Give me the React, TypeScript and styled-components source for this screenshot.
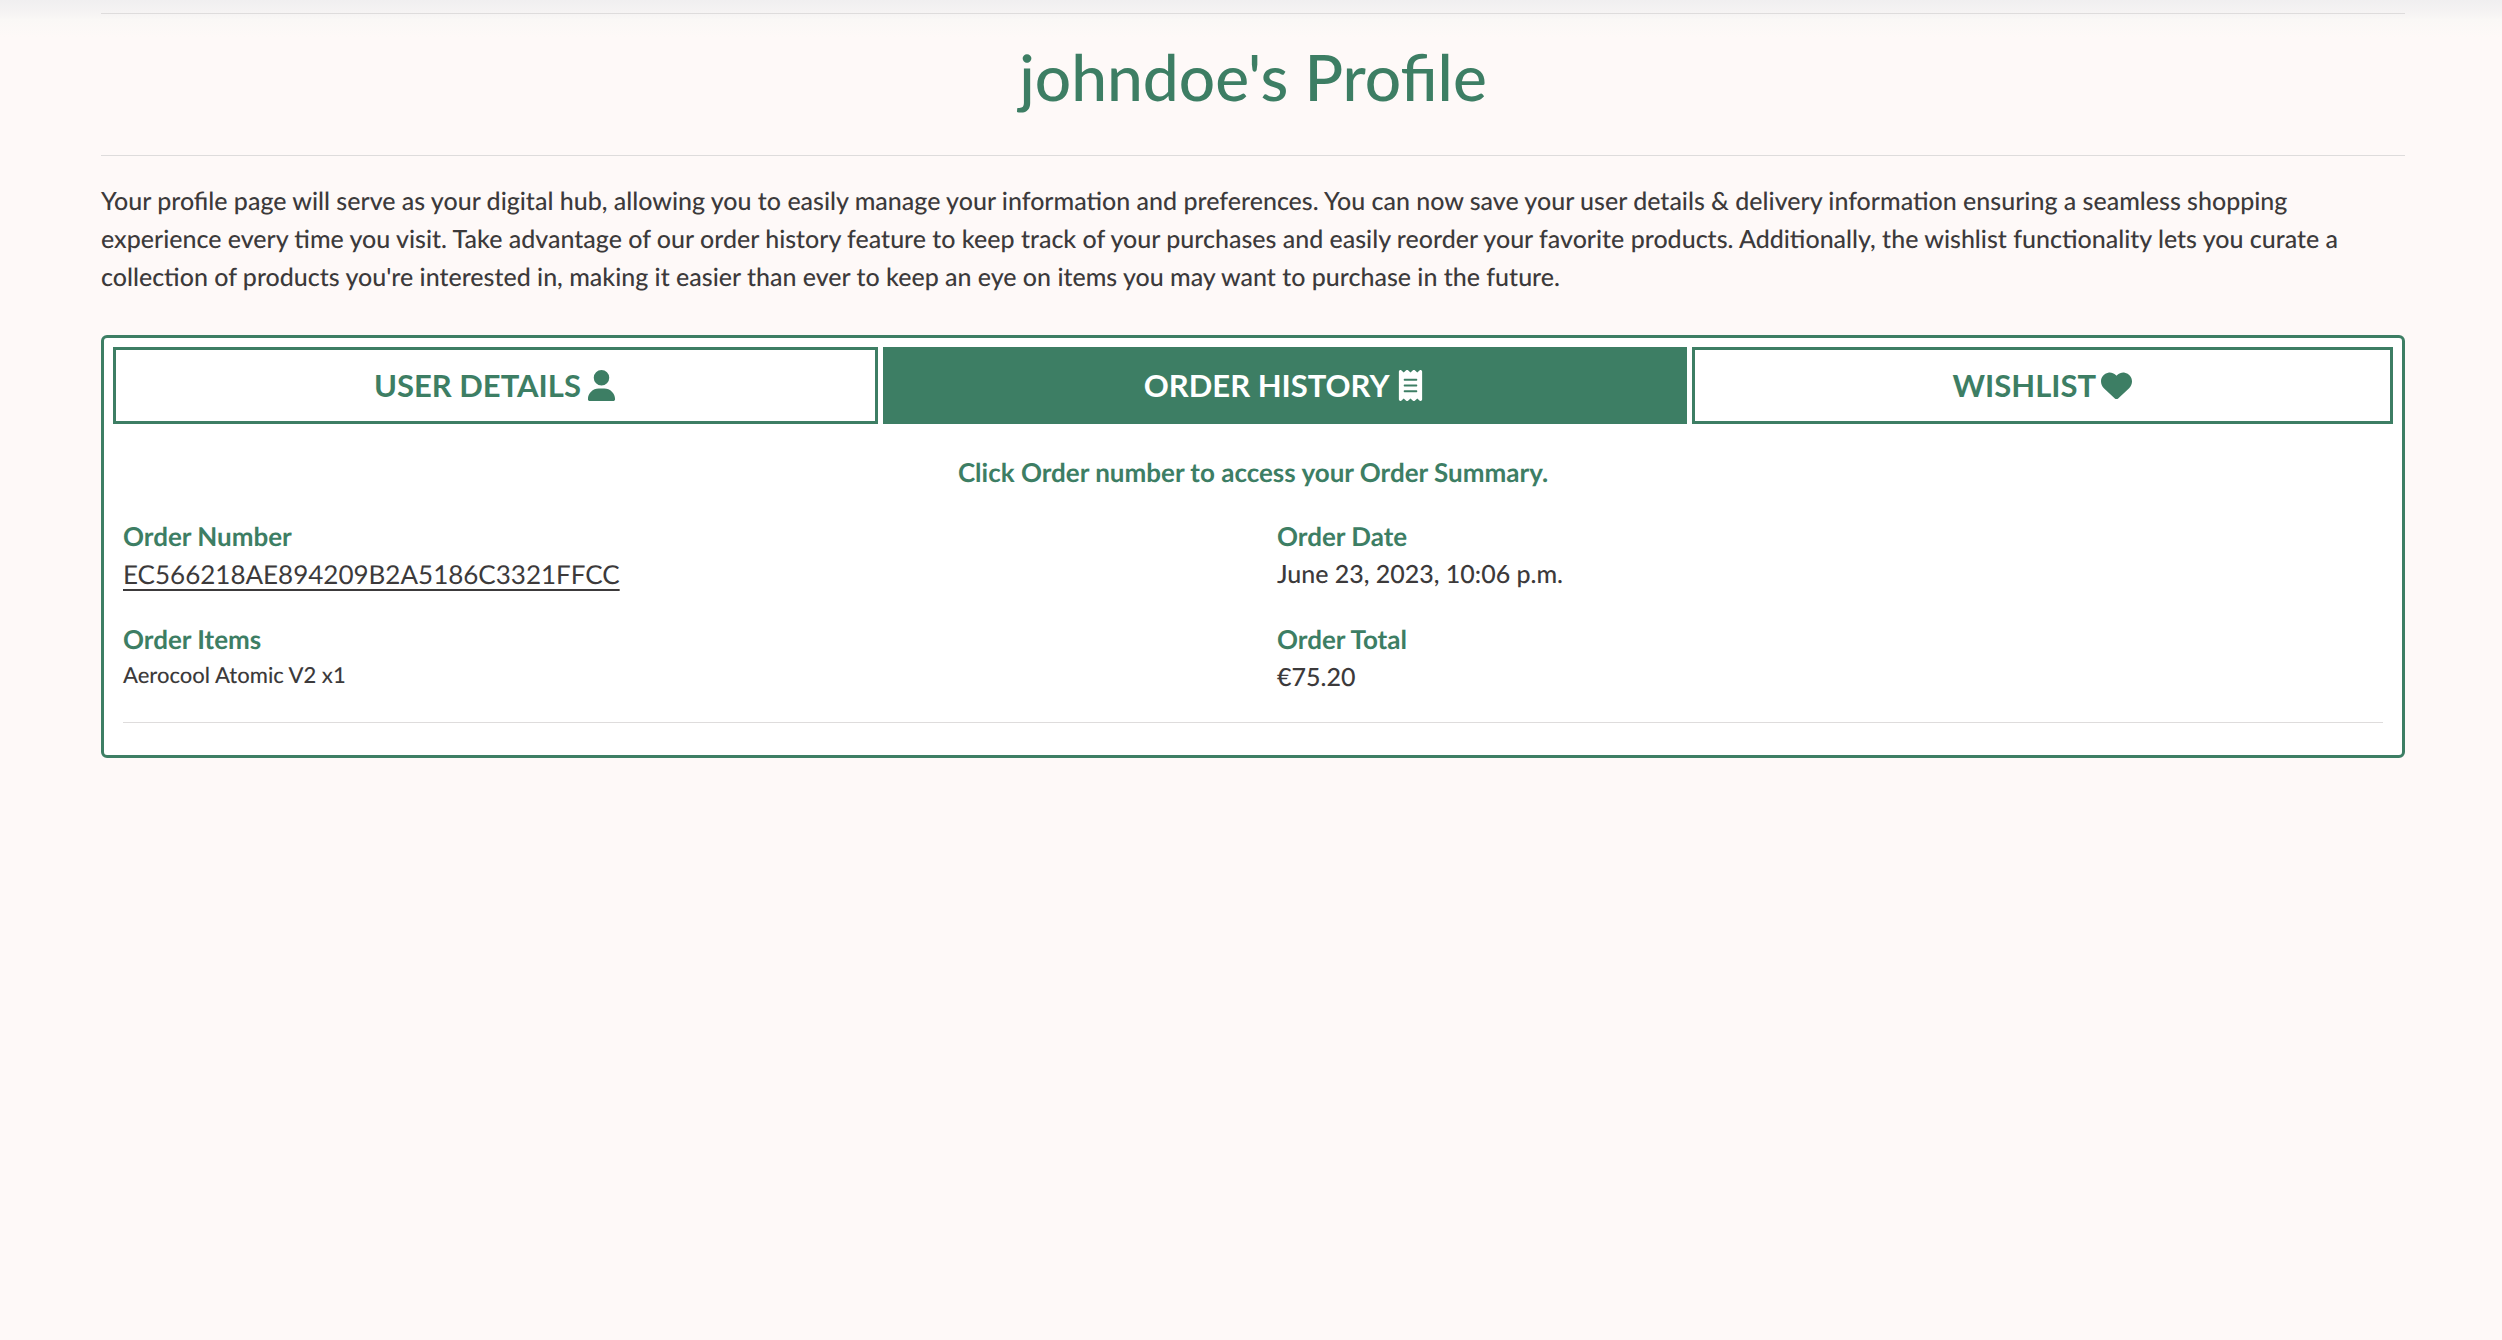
import React, { useState } from "react";
import styled, { createGlobalStyle, css } from "styled-components";
import { FaUser, FaReceipt, FaHeart } from "react-icons/fa6";

const green = "#3d7e64";
const ink = "#3c3a3b";

const GlobalStyle = createGlobalStyle`
  *, *::before, *::after { box-sizing: border-box; }
  body {
    margin: 0;
    background: #fef9f8;
    color: ${ink};
    font-family: Lato, "Open Sans", sans-serif;
    font-size: 26px;
    line-height: 38px;
    text-rendering: geometricPrecision;
  }
`;

const Page = styled.main`
  display: flex;
  flex-direction: column;
  padding: 13px 97px 40px 101px;
  background: linear-gradient(#f0eff0 0, #f5f3f3 12px, #faf8f6 20px, #fef9f8 37px);
`;

const Rule = styled.hr`
  width: 100%;
  height: 1px;
  margin: 0;
  border: 0;
  background: #dedcdc;
`;

const Title = styled.h1`
  margin: 24px 0 40px;
  color: ${green};
  font-size: 64px;
  line-height: 77px;
  font-weight: 500;
  text-align: center;
`;

const Intro = styled.p`
  margin: 26px 0 39px;
  font-size: 25px;
  font-weight: 500;
`;

const Panel = styled.section`
  padding: 9px;
  border: 3px solid ${green};
  border-radius: 6px;
  background: #fff;
`;

const Tabs = styled.div`
  display: flex;
  gap: 5px;
`;

const Tab = styled.button<{ $active: boolean }>`
  display: flex;
  flex: 1 1 auto;
  align-items: center;
  justify-content: center;
  gap: 5px;
  padding: 16px 20px;
  border: 3px solid ${green};
  border-radius: 0;
  background: #fff;
  color: ${green};
  font: 700 31px/39px Lato, "Open Sans", sans-serif;
  text-transform: uppercase;
  cursor: pointer;

  svg {
    height: 31px;
  }

  ${({ $active }) =>
    $active &&
    css`
      background: ${green};
      color: #fff;
    `}
`;

const TabBody = styled.div`
  display: flex;
  flex-direction: column;
  gap: 26px;
  padding: 29px 10px 23px;
`;

const Hint = styled.p`
  margin: 0;
  color: ${green};
  font-weight: 700;
  text-align: center;
`;

const OrderGrid = styled.dl`
  display: grid;
  grid-template-columns: 1fr 1fr;
  gap: 26px 48px;
  margin: 0;
`;

const Label = styled.dt`
  color: ${green};
  font-weight: 700;
`;

const Value = styled.dd<{ $small?: boolean }>`
  margin: 0;
  font-size: 25px;
  font-weight: 500;
  ${({ $small }) => $small && "font-size: 22px; line-height: 33px;"}
`;

const OrderLink = styled.a`
  color: inherit;
  font-size: 26px;
  font-weight: 400;
  text-decoration: underline;
  text-decoration-thickness: 2px;
  text-underline-offset: 5px;
`;

const tabs = [
  { name: "User Details", Icon: FaUser },
  { name: "Order History", Icon: FaReceipt },
  { name: "Wishlist", Icon: FaHeart },
];

export default function App() {
  const [active, setActive] = useState("Order History");

  return (
    <>
      <GlobalStyle />
      <Page>
        <Rule />
        <Title>johndoe's Profile</Title>
        <Rule />
        <Intro>
          Your profile page will serve as your digital hub, allowing you to easily manage your
          information and preferences. You can now save your user details &amp; delivery
          information ensuring a seamless shopping experience every time you visit. Take
          advantage of our order history feature to keep track of your purchases and easily
          reorder your favorite products. Additionally, the wishlist functionality lets you
          curate a collection of products you're interested in, making it easier than ever to
          keep an eye on items you may want to purchase in the future.
        </Intro>
        <Panel>
          <Tabs role="tablist">
            {tabs.map(({ name, Icon }) => (
              <Tab
                key={name}
                type="button"
                role="tab"
                aria-selected={active === name}
                $active={active === name}
                onClick={() => setActive(name)}
              >
                {name}
                <Icon aria-hidden="true" />
              </Tab>
            ))}
          </Tabs>
          <TabBody role="tabpanel">
            <Hint>Click Order number to access your Order Summary.</Hint>
            <OrderGrid>
              <div>
                <Label>Order Number</Label>
                <Value>
                  <OrderLink href="#order">EC566218AE894209B2A5186C3321FFCC</OrderLink>
                </Value>
              </div>
              <div>
                <Label>Order Date</Label>
                <Value>June 23, 2023, 10:06 p.m.</Value>
              </div>
              <div>
                <Label>Order Items</Label>
                <Value $small>Aerocool Atomic V2 x1</Value>
              </div>
              <div>
                <Label>Order Total</Label>
                <Value>€75.20</Value>
              </div>
            </OrderGrid>
            <Rule />
          </TabBody>
        </Panel>
      </Page>
    </>
  );
}
